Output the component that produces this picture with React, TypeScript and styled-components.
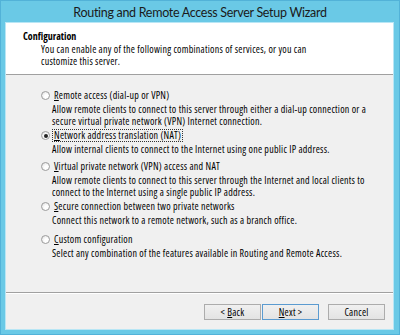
import React from "react";
import styled, { createGlobalStyle } from "styled-components";

const Global = createGlobalStyle`
  html, body { margin: 0; padding: 0; }
  body {
    background: #6ac9e6;
    font-family: "Open Sans", "Liberation Sans", Arial, sans-serif;
    font-stretch: 75%;
  }
`;

const Window = styled.div`
  width: 400px;
  height: 335px;
  box-sizing: border-box;
  background: #6ac9e6;
  border: 1px solid #52b2d8;
  display: flex;
  flex-direction: column;
`;

const TitleBar = styled.div`
  height: 22px;
  flex: none;
  display: flex;
  align-items: center;
  justify-content: center;
  font-family: Lato, "Open Sans", sans-serif;
  font-stretch: 100%;
  font-size: 12.5px;
  letter-spacing: -0.3px;
  color: #1a1a1a;
`;

const Client = styled.div`
  flex: 1;
  margin: 0 6px 5px 5px;
  display: flex;
  flex-direction: column;
  background: #f0f0f0;
  box-shadow: 0 0 0 1px #b8e6f5;
`;

const Header = styled.div`
  flex: none;
  height: 52px;
  box-sizing: border-box;
  background: #ffffff;
  border-bottom: 1px solid #a0a0a0;
  padding: 7px 0 0 17px;
`;

const HeaderTitle = styled.div`
  font-weight: bold;
  font-size: 10px;
  line-height: 12px;
  color: #000;
`;

const Text = styled.div`
  font-size: 10px;
  letter-spacing: 0.25px;
  line-height: 12px;
  color: #000;
  white-space: nowrap;
`;

const HeaderText = styled(Text)`
  margin: 1px 0 0 18px;
`;

const Main = styled.div`
  flex: 1;
  padding: 14px 0 0 35px;
  display: flex;
  flex-direction: column;
`;

const Option = styled.div<{ $mt: number }>`
  display: grid;
  grid-template-columns: 11px 1fr;
  margin-top: ${(p) => p.$mt}px;
`;

const Radio = styled.span<{ $checked: boolean }>`
  align-self: center;
  width: 9px;
  height: 9px;
  box-sizing: border-box;
  border-radius: 50%;
  border: 1px solid #9c9c9c;
  background: radial-gradient(circle at 65% 65%, #ffffff 30%, #dcdcdc 100%);
  position: relative;
  &::after {
    content: "";
    display: ${(p) => (p.$checked ? "block" : "none")};
    position: absolute;
    left: 1.5px;
    top: 1.5px;
    width: 4px;
    height: 4px;
    border-radius: 50%;
    background: #222;
  }
`;

const Label = styled.span<{ $focused: boolean }>`
  justify-self: start;
  font-size: 10px;
  letter-spacing: 0.25px;
  line-height: 11px;
  padding: 0 1px;
  border: 1px dotted ${(p) => (p.$focused ? "#333" : "transparent")};
  color: #000;
  white-space: nowrap;
`;

const Desc = styled(Text)`
  grid-column: 2;
  margin-top: 1px;
`;

const Footer = styled.div`
  flex: none;
  height: 37px;
  box-sizing: border-box;
  border-top: 1px solid #a0a0a0;
  box-shadow: inset 0 1px 0 #ffffff;
  padding: 11px 8px 0 0;
  display: flex;
  justify-content: flex-end;
  align-items: flex-start;
`;

const Button = styled.button<{ $default?: boolean; $ml: number }>`
  width: 57px;
  height: 16px;
  margin-left: ${(p) => p.$ml}px;
  padding: 0;
  box-sizing: border-box;
  border: 1px solid ${(p) => (p.$default ? "#5b9bd0" : "#acacac")};
  background: linear-gradient(#f0f0f0, #e3e3e3);
  font-family: inherit;
  font-stretch: 75%;
  font-size: 10px;
  letter-spacing: 0.25px;
  color: #000;
  line-height: 14px;
`;

type Opt = {
  label: React.ReactNode;
  desc: string[];
  mt: number;
  checked?: boolean;
};

const options: Opt[] = [
  {
    label: (
      <>
        <u>R</u>emote access (dial-up or VPN)
      </>
    ),
    desc: [
      "Allow remote clients to connect to this server through either a dial-up connection or a",
      "secure virtual private network (VPN) Internet connection.",
    ],
    mt: 0,
  },
  {
    label: (
      <>
        <u>N</u>etwork address translation (NAT)
      </>
    ),
    desc: ["Allow internal clients to connect to the Internet using one public IP address."],
    mt: 2,
    checked: true,
  },
  {
    label: (
      <>
        <u>V</u>irtual private network (VPN) access and NAT
      </>
    ),
    desc: [
      "Allow remote clients to connect to this server through the Internet and local clients to",
      "connect to the Internet using a single public IP address.",
    ],
    mt: 5,
  },
  {
    label: (
      <>
        <u>S</u>ecure connection between two private networks
      </>
    ),
    desc: ["Connect this network to a remote network, such as a branch office."],
    mt: 2,
  },
  {
    label: (
      <>
        <u>C</u>ustom configuration
      </>
    ),
    desc: ["Select any combination of the features available in Routing and Remote Access."],
    mt: 7,
  },
];

export default function App() {
  return (
    <>
      <Global />
      <Window>
        <TitleBar>Routing and Remote Access Server Setup Wizard</TitleBar>
        <Client>
          <Header>
            <HeaderTitle>Configuration</HeaderTitle>
            <HeaderText>
              You can enable any of the following combinations of services, or you can
              <br />
              customize this server.
            </HeaderText>
          </Header>
          <Main>
            {options.map((o, i) => (
              <Option key={i} $mt={o.mt}>
                <Radio $checked={!!o.checked} />
                <Label $focused={!!o.checked}>{o.label}</Label>
                <Desc>
                  {o.desc.map((d, j) => (
                    <div key={j}>{d}</div>
                  ))}
                </Desc>
              </Option>
            ))}
          </Main>
          <Footer>
            <Button $ml={0}>
              &lt; <u>B</u>ack
            </Button>
            <Button $ml={1} $default>
              <u>N</u>ext &gt;
            </Button>
            <Button $ml={9}>Cancel</Button>
          </Footer>
        </Client>
      </Window>
    </>
  );
}
